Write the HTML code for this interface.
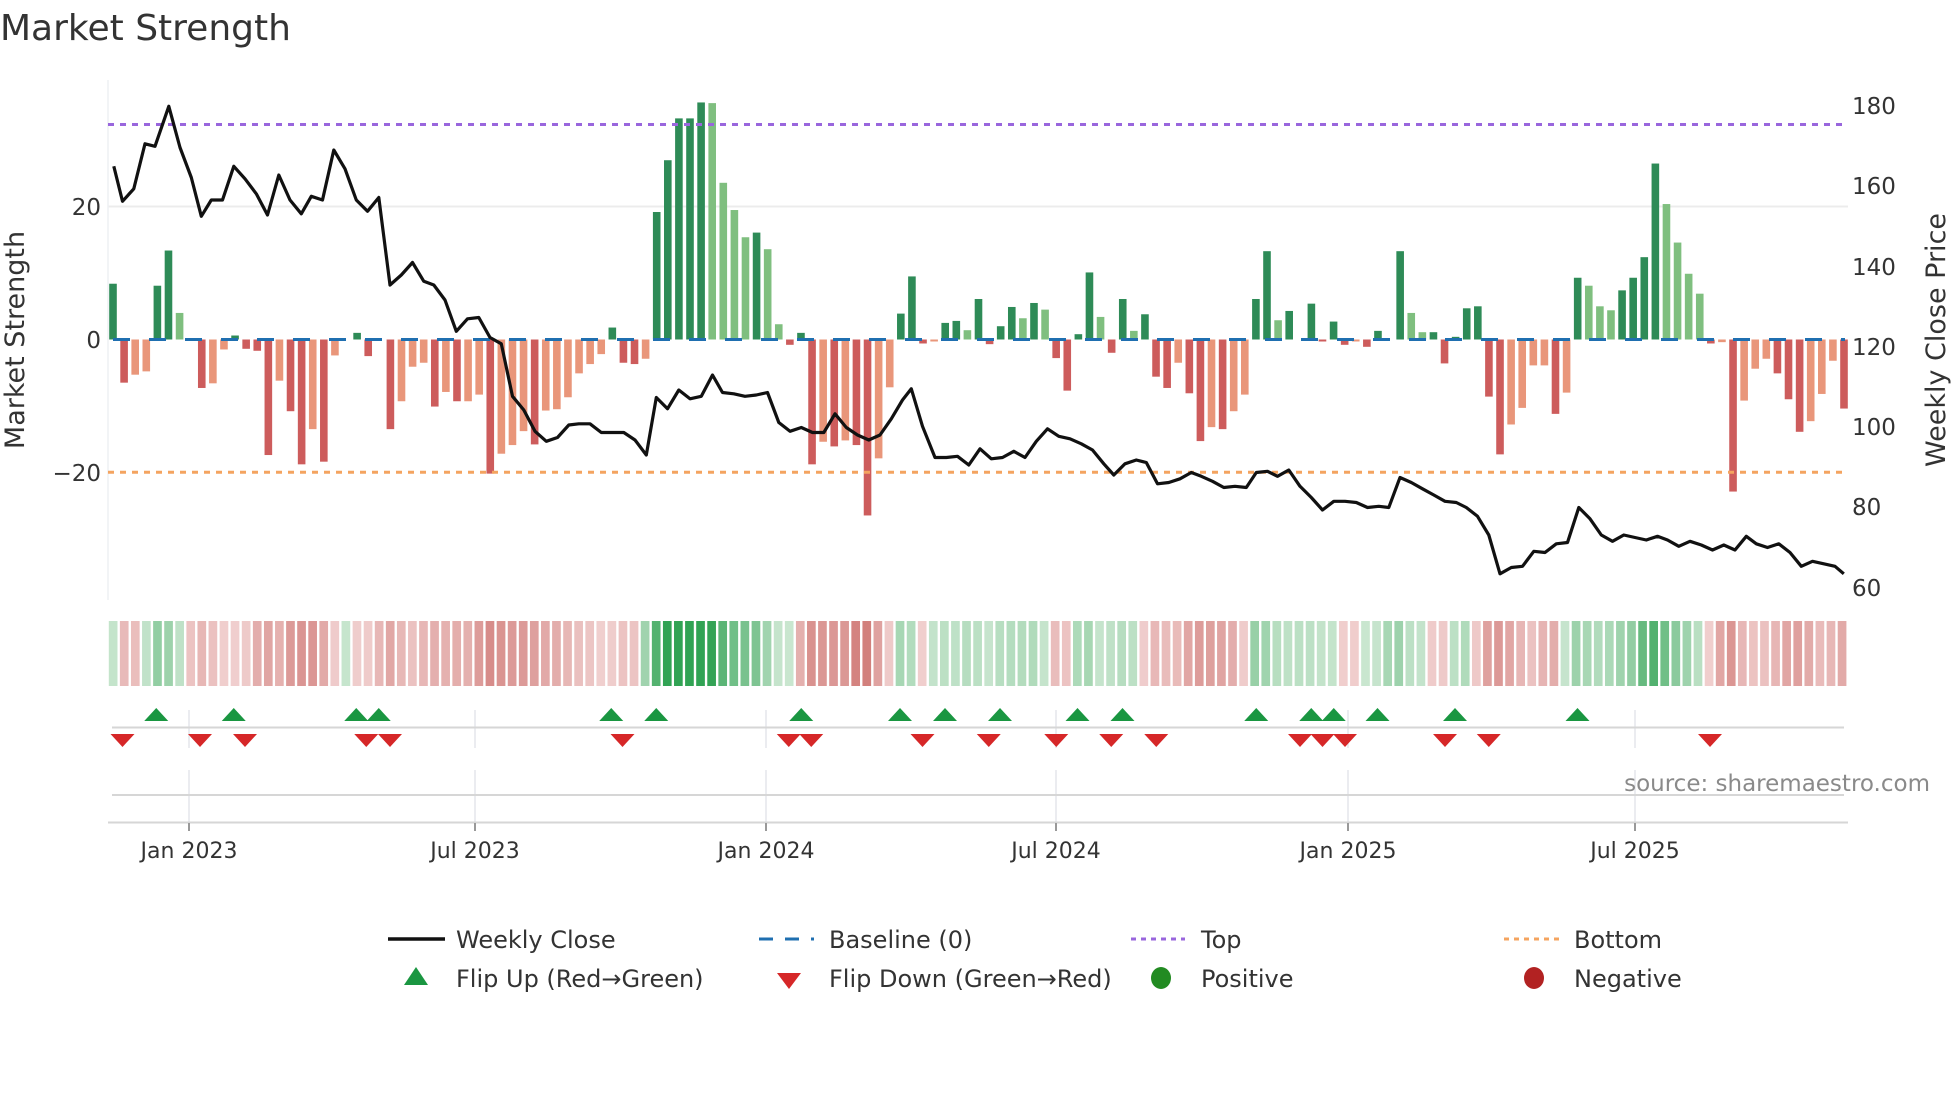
<!DOCTYPE html>
<html><head><meta charset="utf-8"><style>
html,body{margin:0;padding:0;background:#fff;width:1960px;height:1102px;overflow:hidden}
svg{display:block}
text{font-family:"DejaVu Sans","Liberation Sans",sans-serif;fill:#333}
</style></head><body>
<svg id="s" width="1960" height="1102" viewBox="0 0 1960 1102" xmlns="http://www.w3.org/2000/svg">
<text x="0" y="40" font-size="36">Market Strength</text>
<line x1="108" y1="206.5" x2="1848" y2="206.5" stroke="#ececec" stroke-width="2"/>
<line x1="108" y1="80" x2="108" y2="600" stroke="#eef0f3" stroke-width="1.5"/>
<g id="bars"></g>
<line x1="108" y1="124.5" x2="1845" y2="124.5" stroke="#9966dd" stroke-width="3" stroke-dasharray="6 6"/>
<line x1="108" y1="472.3" x2="1845" y2="472.3" stroke="#f4a460" stroke-width="3" stroke-dasharray="6 6"/>
<line x1="113" y1="339.5" x2="1845" y2="339.5" stroke="#1f6fb0" stroke-width="3" stroke-dasharray="17 19"/>
<polyline id="price" fill="none" stroke="#111" stroke-width="3.2" stroke-linejoin="round"/>
<text x="101" y="215" font-size="23" text-anchor="end">20</text>
<text x="101" y="348" font-size="23" text-anchor="end">0</text>
<text x="101" y="481" font-size="23" text-anchor="end">−20</text>
<text transform="translate(24,340) rotate(-90)" font-size="27" text-anchor="middle">Market Strength</text>
<g font-size="23">
<text x="1852" y="114">180</text><text x="1852" y="194">160</text><text x="1852" y="275">140</text>
<text x="1852" y="355">120</text><text x="1852" y="435">100</text><text x="1852" y="515">80</text><text x="1852" y="596">60</text>
</g>
<text transform="translate(1945,340) rotate(-90)" font-size="27" text-anchor="middle">Weekly Close Price</text>
<g id="heat"></g>
<g stroke="#e4e6ea" stroke-width="1.5">
<line x1="189" y1="710" x2="189" y2="748"/><line x1="475" y1="710" x2="475" y2="748"/><line x1="766" y1="710" x2="766" y2="748"/>
<line x1="1056" y1="710" x2="1056" y2="748"/><line x1="1348" y1="710" x2="1348" y2="748"/><line x1="1635" y1="710" x2="1635" y2="748"/>
<line x1="189" y1="770" x2="189" y2="822"/><line x1="475" y1="770" x2="475" y2="822"/><line x1="766" y1="770" x2="766" y2="822"/>
<line x1="1056" y1="770" x2="1056" y2="822"/><line x1="1348" y1="770" x2="1348" y2="822"/><line x1="1635" y1="770" x2="1635" y2="822"/>
</g>
<line x1="112" y1="727.5" x2="1844" y2="727.5" stroke="#d6d6d6" stroke-width="2"/>
<line x1="112" y1="795" x2="1844" y2="795" stroke="#d6d6d6" stroke-width="2"/>
<line x1="108" y1="822.5" x2="1848" y2="822.5" stroke="#d6d6d6" stroke-width="2"/>
<g id="tri"></g>
<g stroke="#999" stroke-width="2">
<line x1="189" y1="823" x2="189" y2="831"/><line x1="475" y1="823" x2="475" y2="831"/><line x1="766" y1="823" x2="766" y2="831"/>
<line x1="1056" y1="823" x2="1056" y2="831"/><line x1="1348" y1="823" x2="1348" y2="831"/><line x1="1635" y1="823" x2="1635" y2="831"/>
</g>
<g font-size="22" text-anchor="middle">
<text x="189" y="858">Jan 2023</text><text x="475" y="858">Jul 2023</text><text x="766" y="858">Jan 2024</text>
<text x="1056" y="858">Jul 2024</text><text x="1348" y="858">Jan 2025</text><text x="1635" y="858">Jul 2025</text>
</g>
<text x="1930" y="791" font-size="23" text-anchor="end" style="fill:#8a8a8a">source: sharemaestro.com</text>
<g font-size="24">
<line x1="388" y1="939" x2="445" y2="939" stroke="#111" stroke-width="3.5"/>
<text x="456" y="948">Weekly Close</text>
<line x1="759" y1="939" x2="814" y2="939" stroke="#1f6fb0" stroke-width="3" stroke-dasharray="14 12"/>
<text x="829" y="948">Baseline (0)</text>
<line x1="1131" y1="939" x2="1185" y2="939" stroke="#9966dd" stroke-width="3" stroke-dasharray="5 5"/>
<text x="1201" y="948">Top</text>
<line x1="1504" y1="939" x2="1559" y2="939" stroke="#f4a460" stroke-width="3" stroke-dasharray="5 5"/>
<text x="1574" y="948">Bottom</text>
<polygon points="416,967 404,985 428,985" fill="#1a9641"/>
<text x="456" y="987">Flip Up (Red→Green)</text>
<polygon points="777,973 801,973 789,989" fill="#d62728"/>
<text x="829" y="987">Flip Down (Green→Red)</text>
<ellipse cx="1161" cy="978" rx="10" ry="11" fill="#228b22"/>
<text x="1201" y="987">Positive</text>
<ellipse cx="1534" cy="978" rx="10" ry="11" fill="#b22222"/>
<text x="1574" y="987">Negative</text>
</g>
</svg>
<script>
var v=[8.4,-6.5,-5.3,-4.8,8.1,13.4,4.0,0.1,-7.3,-6.6,-1.5,0.6,-1.4,-1.7,-17.4,-6.2,-10.8,-18.8,-13.5,-18.4,-2.4,0,1.0,-2.5,0,-13.5,-9.3,-4.1,-3.5,-10.1,-7.9,-9.3,-9.3,-8.3,-20.2,-17.2,-15.9,-13.8,-15.8,-10.7,-10.5,
-8.7,-5.1,-3.7,-2.2,1.8,-3.5,-3.7,-2.9,19.2,27,33.3,33.3,35.7,35.6,23.6,19.5,15.4,16.1,13.6,2.3,-0.8,1.0,-18.8,-15.4,-16.1,-15.2,-15.9,-26.5,-17.9,-7.2,3.9,9.5,-0.6,-0.3,2.5,2.8,1.4,6.1,-0.7,2.0,4.9,3.2,
5.5,4.5,-2.8,-7.7,0.8,10.1,3.4,-2.0,6.1,1.3,3.8,-5.6,-7.3,-3.5,-8.1,-15.3,-13.2,-13.5,-10.8,-8.3,6.1,13.3,2.9,4.3,0,5.4,-0.3,2.7,-0.8,-0.3,-1.1,1.3,0,13.3,4.0,1.1,1.1,-3.6,0.4,4.7,5.0,
-8.6,-17.3,-12.8,-10.3,-3.9,-3.9,-11.2,-8.0,9.3,8.1,5.0,4.4,7.4,9.3,12.4,26.5,20.4,14.6,9.9,6.9,-0.6,-0.4,-22.9,-9.2,-4.4,-2.9,-5.1,-9.0,-13.9,-12.3,-8.2,-3.2,-10.4];
var c=("DDLLDDLLDLLDDDDLDDLDLLDDLDLLLDLDLLDLLLDLL"+"LLLLDDDLDDDDDLLLLDLLDDDLDLDDLLDDDLDDLDDDDL"+"DLDDDDLDDLDDDLDDLDLLDDLDLDDDDLDDLDLLDDDDD"+"DDLLLLDLDLLLDDDDLLLLDLDLLLDDDLLLD");
var NS="http://www.w3.org/2000/svg",B=document.getElementById("bars"),H=document.getElementById("heat");
function el(t,a,p){var e=document.createElementNS(NS,t);for(var k in a)e.setAttribute(k,a[k]);p.appendChild(e);return e;}
var K=1.25,pitch=(1844-113)/156,u=6.64,z=339.5,hp=(1848-108)/157;
for(var i=0;i<v.length;i++){var x=113+i*pitch,val=v[i],col;
 if(val>=0)col=c[i]=="D"?"#2e8b57":"#7fbf7f";else col=c[i]=="D"?"#cd5c5c":"#e9967a";
 var h=Math.abs(val)*u;if(h>0.3)el("rect",{x:x-3.8,y:val>=0?z-h:z,width:7.6,height:h,fill:col},B);
 var hv=(i+1<v.length)?(v[i]*0.5+v[i+1]*0.5):v[i];var t=Math.min(Math.abs(hv)/30,1);t=0.18+0.82*t;
 var r,g,b;if(hv>=0){r=235+(49-235)*t;g=245+(163-245)*t;b=235+(84-235)*t;}else{r=250+(200-250)*t;g=232+(100-232)*t;b=232+(96-232)*t;}
 el("rect",{x:108+i*hp+0.8,y:621,width:hp-2.4,height:65,fill:"rgb("+(r|0)+","+(g|0)+","+(b|0)+")"},H);
}
var up=[125,187,285,303,489,525,641,720,756,800,862,898,1005,1049,1067,1102,1164,1262],dn=[98,160,196,293,312,498,631,649,738,791,845,889,925,1040,1058,1076,1156,1191,1368],T=document.getElementById("tri");
up.forEach(function(d){var x=d*K;el("polygon",{points:(x-12)+",721 "+(x+12)+",721 "+x+",708",fill:"#1a9641"},T);});
dn.forEach(function(d){var x=d*K;el("polygon",{points:(x-12)+",734 "+(x+12)+",734 "+x+",747",fill:"#d62728"},T);});
var p=[91,133,98,161,107,151,116,115,124,117,135,85,144,118,153,142,161,173,169,160,178,160,187,133,196,143,205,155,214,172,223,140,232,160,241,171,249,157,258,160,267,120,276,135,285,160,294,169,303,158,312,228,321,220,330,210,339,225,347,228,356,240,365,265,374,255,383,254,392,270,401,275,410,317,419,328,428,345,437,353,446,350,455,340,463,339,472,339,481,346,490,346,499,346,508,352,517,364,525,318,534,327,543,312,552,319,561,317,570,300,578,314,587,315,596,317,605,316,614,314,623,338,632,345,641,342,650,346,659,346,668,331,677,342,686,348,695,352,704,348,713,335,722,320,729,311,738,341,748,366,757,366,766,365,775,372,784,359,793,367,802,366,811,361,820,366,829,353,838,343,847,349,856,351,865,355,874,360,883,371,891,380,900,371,909,368,917,370,926,387,935,386,944,383,953,378,961,381,970,385,979,390,988,389,997,390,1005,378,1014,377,1022,381,1031,376,1040,389,1049,398,1058,408,1067,401,1076,401,1085,402,1094,406,1103,405,1111,406,1120,382,1129,386,1138,391,1147,396,1156,401,1165,402,1173,406,1182,413,1191,428,1200,459,1209,454,1218,453,1227,441,1236,442,1245,435,1254,434,1263,406,1272,415,1281,428,1290,433,1299,428,1308,430,1317,432,1326,429,1334,432,1343,437,1352,433,1361,436,1370,440,1379,436,1388,440,1397,429,1405,435,1414,438,1423,435,1432,442,1441,453,1450,449,1459,451,1468,453,1475,459];
var s="";for(var j=0;j<p.length;j+=2)s+=(p[j]*K).toFixed(1)+","+(p[j+1]*K).toFixed(1)+" ";
document.getElementById("price").setAttribute("points",s);
</script>
</body></html>
